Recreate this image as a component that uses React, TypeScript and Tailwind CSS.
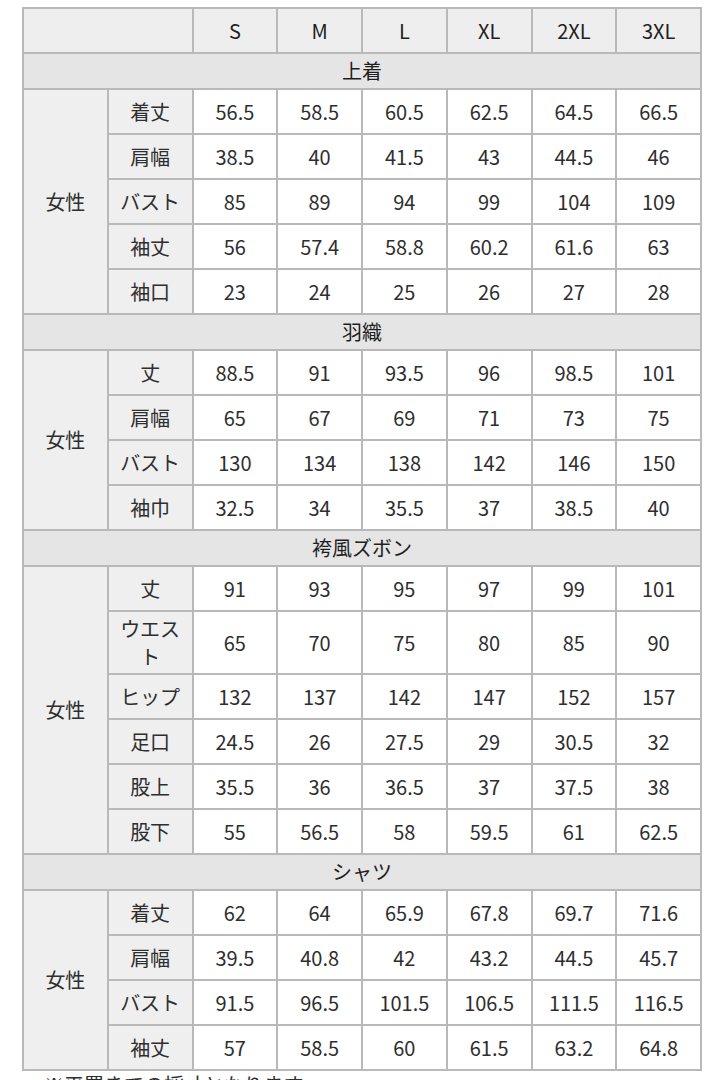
import type { ReactNode } from 'react';

const SIZES = ['S', 'M', 'L', 'XL', '2XL', '3XL'];

type Row = { label: string; values: string[] };
type Section = { title: string; rows: Row[] };

const SECTIONS: Section[] = [
  {
    title: '上着',
    rows: [
      { label: '着丈', values: ['56.5', '58.5', '60.5', '62.5', '64.5', '66.5'] },
      { label: '肩幅', values: ['38.5', '40', '41.5', '43', '44.5', '46'] },
      { label: 'バスト', values: ['85', '89', '94', '99', '104', '109'] },
      { label: '袖丈', values: ['56', '57.4', '58.8', '60.2', '61.6', '63'] },
      { label: '袖口', values: ['23', '24', '25', '26', '27', '28'] },
    ],
  },
  {
    title: '羽織',
    rows: [
      { label: '丈', values: ['88.5', '91', '93.5', '96', '98.5', '101'] },
      { label: '肩幅', values: ['65', '67', '69', '71', '73', '75'] },
      { label: 'バスト', values: ['130', '134', '138', '142', '146', '150'] },
      { label: '袖巾', values: ['32.5', '34', '35.5', '37', '38.5', '40'] },
    ],
  },
  {
    title: '袴風ズボン',
    rows: [
      { label: '丈', values: ['91', '93', '95', '97', '99', '101'] },
      { label: 'ウエスト', values: ['65', '70', '75', '80', '85', '90'] },
      { label: 'ヒップ', values: ['132', '137', '142', '147', '152', '157'] },
      { label: '足口', values: ['24.5', '26', '27.5', '29', '30.5', '32'] },
      { label: '股上', values: ['35.5', '36', '36.5', '37', '37.5', '38'] },
      { label: '股下', values: ['55', '56.5', '58', '59.5', '61', '62.5'] },
    ],
  },
  {
    title: 'シャツ',
    rows: [
      { label: '着丈', values: ['62', '64', '65.9', '67.8', '69.7', '71.6'] },
      { label: '肩幅', values: ['39.5', '40.8', '42', '43.2', '44.5', '45.7'] },
      { label: 'バスト', values: ['91.5', '96.5', '101.5', '106.5', '111.5', '116.5'] },
      { label: '袖丈', values: ['57', '58.5', '60', '61.5', '63.2', '64.8'] },
    ],
  },
];

function Cell({ children, className = '' }: { children?: ReactNode; className?: string }) {
  return (
    <div className={`flex items-center justify-center text-center px-2 leading-[28px] ${className}`}>
      {children}
    </div>
  );
}

export default function App() {
  return (
    <div className="bg-white w-[720px] h-[1080px] overflow-hidden font-['Noto_Sans_CJK_JP','Noto_Sans',sans-serif] text-[20px] text-[#2e2e2e]">
      <div className="pt-[7px] pl-[22px]">
        <div className="w-[680px] bg-[#b9b9b9] p-[2px] grid grid-cols-8 gap-[2px] grid-rows-[43px_34px_repeat(5,43px)_34px_repeat(4,43px)_34px_43px_61px_repeat(4,43px)_34px_repeat(4,43px)]">
          {/* size header */}
          <Cell className="col-span-2 bg-[#eeeeee]" />
          {SIZES.map((s) => (
            <Cell key={s} className="bg-[#eeeeee] text-[#1e1e1e]">
              {s}
            </Cell>
          ))}

          {SECTIONS.map((section) => (
            <SectionBlock key={section.title} section={section} />
          ))}
        </div>
        <p className="pl-[22px] text-[20px] leading-[28px] text-[#2e2e2e]">
          ※平置きでの採寸となります
        </p>
      </div>
    </div>
  );
}

function SectionBlock({ section }: { section: Section }) {
  const span = section.rows.length;
  return (
    <>
      <Cell className="col-span-8 bg-[#e5e5e5] text-[#1e1e1e]">{section.title}</Cell>
      <Cell
        className={`bg-[#efefef] ${
          span === 4 ? 'row-span-4' : span === 5 ? 'row-span-5' : 'row-span-6'
        }`}
      >
        女性
      </Cell>
      {section.rows.map((row) => (
        <RowCells key={row.label} row={row} />
      ))}
    </>
  );
}

function RowCells({ row }: { row: Row }) {
  return (
    <>
      <Cell className="bg-[#efefef]">{row.label}</Cell>
      {row.values.map((v, i) => (
        <Cell key={i} className="bg-white">
          {v}
        </Cell>
      ))}
    </>
  );
}
